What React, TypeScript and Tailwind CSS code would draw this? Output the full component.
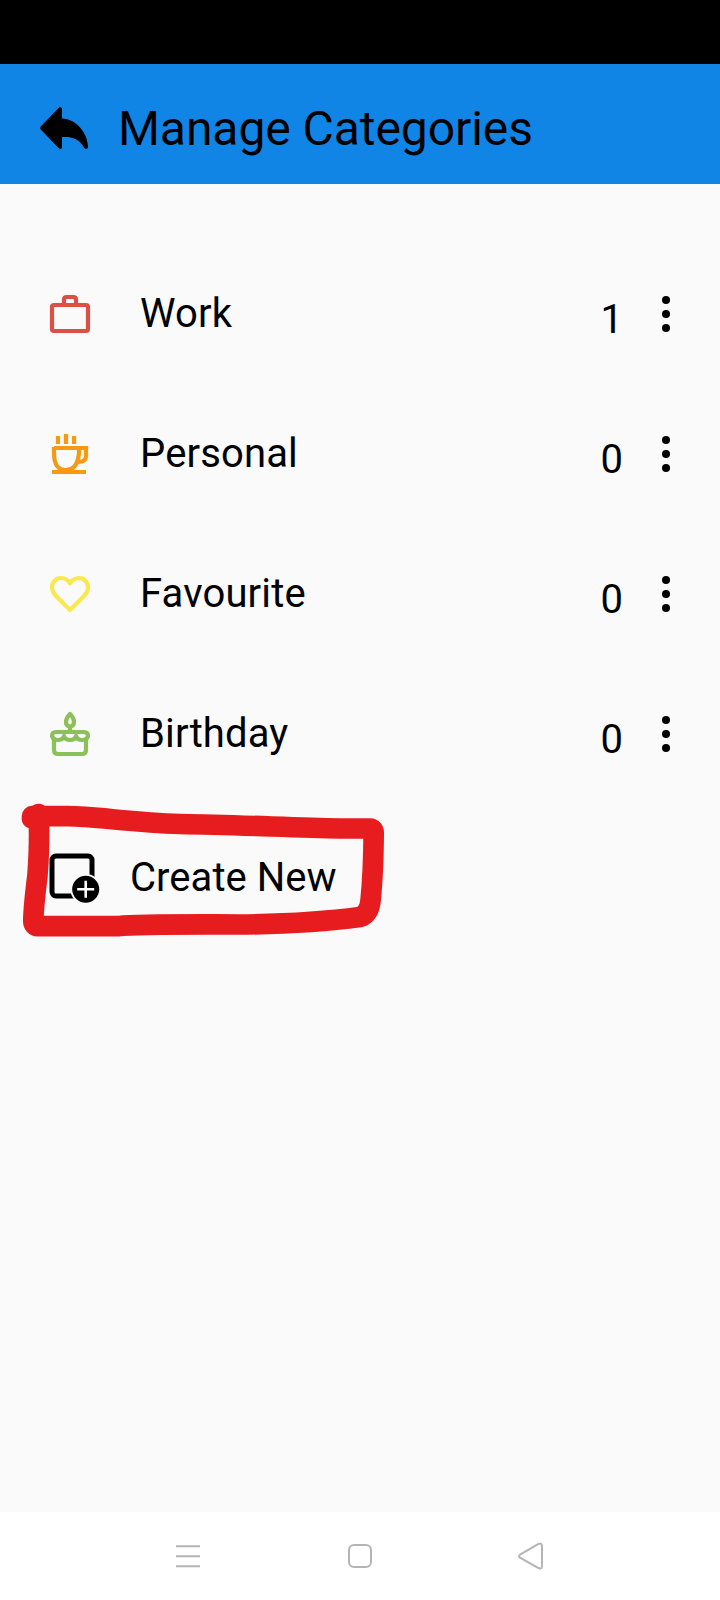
import React from "react";

type Category = { name: string; count: number; color: string; icon: React.ReactNode };

const categories: Category[] = [
  {
    name: "Work",
    count: 1,
    color: "text-[#dd4f43]",
    icon: (
      <>
        <rect x="14" y="23" width="36" height="26" rx="2" />
        <path d="M26 23V17.500Q26 15 28.500 15H35.500Q38 15 38 17.500V23" />
      </>
    ),
  },
  {
    name: "Personal",
    count: 0,
    color: "text-[#f79a12]",
    icon: (
      <>
        <path d="M20 14V22M28 12V22M36 14V22M14 50H48" />
        <path
          d="M16 26H48V34Q48 40 40 40M16 25V31C16 42 19 48 28 48C36 48 40 42 41 31V26"
          strokeLinejoin="miter"
        />
      </>
    ),
  },
  {
    name: "Favourite",
    count: 0,
    color: "text-[#fbe84f]",
    icon: (
      <path d="M32 21.500C30 18 27 16 23 16C18 16 14 20 14 25.500C14 29 16 32 18.500 34.500L32 48L45.500 34.500C48 32 50 29 50 25.500C50 20 46 16 41 16C37 16 34 18 32 21.500Z" />
    ),
  },
  {
    name: "Birthday",
    count: 0,
    color: "text-[#8bc158]",
    icon: (
      <>
        <path d="M32 12C30 14 28 17 28 20Q28 24 32 24.500Q36 24 36 20C36 17 34 14 32 12ZM32 25V30" />
        <path d="M14 34Q14 30 18 30H46Q50 30 50 34Q49 38 44 38Q39 38 38 34Q37 38 32 38Q27 38 26 34Q25 38 20 38Q15 38 14 34Z" />
        <path d="M16 38V48Q16 52 20 52H44Q48 52 48 48V38" />
      </>
    ),
  },
];

function MoreIcon() {
  return (
    <svg className="h-9 w-2 shrink-0" viewBox="0 0 8 36">
      <circle cx="4" cy="4" r="4" />
      <circle cx="4" cy="18" r="4" />
      <circle cx="4" cy="32" r="4" />
    </svg>
  );
}

function CategoryRow({ name, count, color, icon }: Category) {
  return (
    <li className="flex h-[140px] items-center pl-[38px] pr-[50px]">
      <svg
        className={`size-16 shrink-0 ${color}`}
        viewBox="0 0 64 64"
        fill="none"
        stroke="currentColor"
        strokeWidth="4.200"
        strokeLinejoin="round"
      >
        {icon}
      </svg>
      <span className="ml-[38px] flex-1 text-[40px] leading-none tracking-[0.15px]">{name}</span>
      <span className="mr-[39px] pt-3 text-[40px] leading-none">{count}</span>
      <MoreIcon />
    </li>
  );
}

export default function App() {
  return (
    <div className="relative flex h-[1600px] w-[720px] flex-col bg-[#fafafa] font-[Roboto,sans-serif] text-black">
      <div className="h-16 bg-black" />
      <header className="flex h-[120px] items-center bg-[#1085e5] pl-10 pt-2">
        <svg className="h-[42px] w-12" viewBox="0 0 48 42">
          <path d="M0.700 19.500L18.500 1Q20 -0.500 21.500 0.500Q22 1 22 2V11.500C36 12 47 25 48 39Q48 42 46 42Q45 42 44 40.500C39 31.500 32 29.500 22 30V40Q22 41.500 21 42Q19.500 42 18.500 41L0.700 22.500Q-0.500 21 0.700 19.500Z" />
        </svg>
        <h1 className="ml-[30px] pt-0.5 text-[48px] leading-none tracking-[-0.06px]">Manage Categories</h1>
      </header>

      <main className="flex flex-1 flex-col pt-[60px]">
        <ul>
          {categories.map((c) => (
            <CategoryRow key={c.name} {...c} />
          ))}
        </ul>
        <button className="flex h-[148px] items-center pl-[49px] text-left">
          <svg className="h-[50px] w-[52px]" viewBox="0 0 52 50">
            <rect x="3" y="3" width="40" height="40" rx="4" fill="none" stroke="black" strokeWidth="5" />
            <circle cx="36.700" cy="36.300" r="15.300" fill="#fafafa" />
            <circle cx="36.700" cy="36.300" r="13.500" />
            <path d="M28.200 36.300H45.200M36.700 27.800V44.800" stroke="white" strokeWidth="2.600" />
          </svg>
          <span className="ml-[29px] pb-px text-[40px] leading-none tracking-[0.05px]">Create New</span>
        </button>
      </main>

      <nav className="flex h-[88px] items-center justify-between bg-white pl-[176px] pr-[176px] text-[#b5b5b5]">
        <svg className="h-7 w-6" viewBox="0 0 24 28" fill="none" stroke="currentColor" strokeWidth="2">
          <path d="M0 4.300H24M0 14.300H24M0 24.300H24" />
        </svg>
        <svg className="ml-0.5 h-7 w-6" viewBox="0 0 24 28" fill="none" stroke="currentColor" strokeWidth="2">
          <rect x="1" y="3" width="22" height="22" rx="5" />
        </svg>
        <svg className="h-7 w-[26px]" viewBox="0 0 26 28" fill="none" stroke="currentColor" strokeWidth="2">
          <path d="M2 12.700L20.500 2Q24 0.700 24 4V24Q24 27.500 20.500 26L2 15.700Q0.200 14.200 2 12.700Z" />
        </svg>
      </nav>

      <svg
        className="pointer-events-none absolute left-0 top-[790px] h-40 w-[400px]"
        viewBox="0 790 400 160"
        fill="none"
        stroke="#e71c1e"
        strokeWidth="20.700"
        strokeLinecap="round"
        strokeLinejoin="round"
      >
        <path d="M32 818.500L38.500 814C39.500 830 39.300 850 37.500 875C35 895 33.500 908 33.300 921Q33.300 926 38 926.200H118C140 924 185 924.500 240 924.500C290 924 330 921 360 917Q369 914 370.500 901C373 877 373.500 856 373.700 833Q373.500 828.500 370 828.500H340C290 827.500 240 825 180 824C130 822.500 90 815.500 65 816.200H32" />
      </svg>
    </div>
  );
}
